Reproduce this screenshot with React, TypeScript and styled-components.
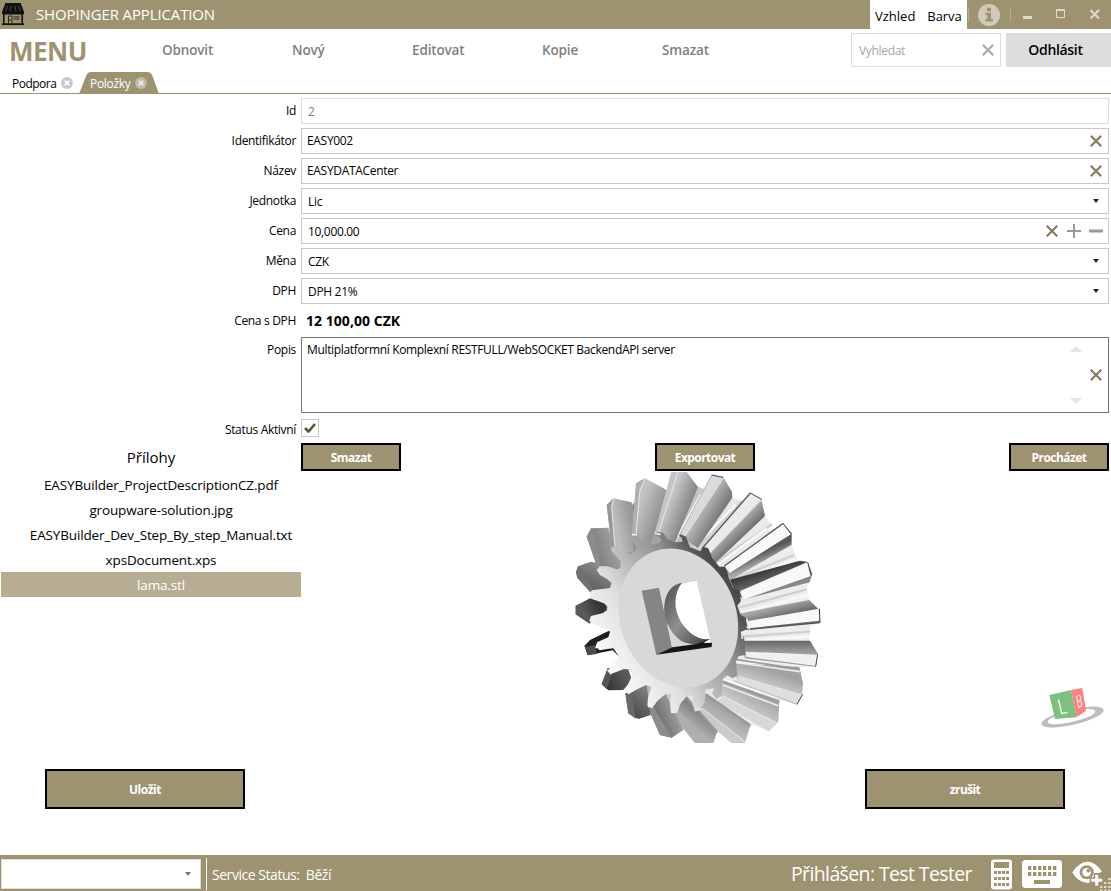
import React from "react";
import styled, { createGlobalStyle } from "styled-components";

const olive = "#9e9371";

const GlobalStyle = createGlobalStyle`
  * { box-sizing: border-box; }
  body {
    margin: 0;
    background: #fff;
    color: #000;
    font-family: "Open Sans", "Noto Sans", sans-serif;
    font-size: 12px;
    overflow: hidden;
  }
  button { font-family: inherit; }
`;

const Window = styled.div`
  width: 1111px;
  height: 891px;
  display: flex;
  flex-direction: column;
  overflow: hidden;
`;

const Label = styled.span<{ $size?: number; $track?: number; $weight?: number; $color?: string }>`
  font-size: ${(p) => p.$size ?? 12}px;
  letter-spacing: ${(p) => p.$track ?? -0.32}px;
  font-weight: ${(p) => p.$weight ?? 400};
  color: ${(p) => p.$color ?? "inherit"};
  white-space: nowrap;
`;

const TitleBar = styled.header`
  height: 29px;
  flex: none;
  display: flex;
  background: ${olive};
  color: #fff;
`;

const AppIcon = styled.div`
  width: 36px;
  padding: 2px 0 0 1px;
`;

const AppName = styled.div`
  flex: 1;
  line-height: 29px;
`;

const ThemeMenu = styled.div`
  width: 97px;
  background: #fff;
  color: #000;
  display: flex;
  gap: 12px;
  padding-left: 5px;
  line-height: 32px;
`;

const InfoBox = styled.div`
  width: 43px;
  margin-left: 1px;
  height: 15px;
  margin-top: 7px;
  padding-right: 2px;
  border-left: 1px solid #b6ad92;
  border-right: 1px solid #b6ad92;
  display: flex;
  align-items: center;
  justify-content: center;
`;

const WindowControls = styled.div`
  width: 100px;
  display: flex;
`;

const Toolbar = styled.nav`
  height: 43px;
  flex: none;
  display: flex;
`;

const MenuTitle = styled.div`
  width: 162px;
  padding-left: 9px;
  line-height: 45px;
`;

const MenuItem = styled.div<{ $width: number }>`
  width: ${(p) => p.$width}px;
  line-height: 42px;
`;

const SearchBox = styled.div`
  width: 150px;
  height: 34px;
  margin: 4px 5px 0 auto;
  border: 1px solid #ddd;
  display: flex;
  align-items: center;
  justify-content: space-between;
  padding: 0 6px 0 7px;
`;

const LogoutButton = styled.button`
  width: 105px;
  height: 34px;
  margin-top: 4px;
  padding: 0 6px 2px 0;
  border: 0;
  background: #ddd;
`;

const TabStrip = styled.div`
  height: 22px;
  flex: none;
  display: flex;
  border-bottom: 1px solid ${olive};
`;

const Tab = styled.div<{ $width: number; $active?: boolean }>`
  position: relative;
  width: ${(p) => p.$width}px;
  height: 22px;
  display: flex;
  align-items: center;
  gap: 5px;
  padding-left: ${(p) => (p.$active ? 10 : 12)}px;
  color: ${(p) => (p.$active ? "#fff" : "#000")};
`;

const TabShape = styled.svg`
  position: absolute;
  left: -1px;
  top: 0;
  z-index: -1;
`;

const Main = styled.main`
  height: 761px;
  flex: none;
  display: flex;
  flex-direction: column;
`;

const Form = styled.form`
  display: flex;
  flex-direction: column;
  gap: 4px;
  padding: 4px 2px 0 0;
`;

const Row = styled.div<{ $height?: number; $lift?: number }>`
  display: flex;
  height: ${(p) => p.$height ?? 26}px;
  margin-top: ${(p) => -(p.$lift ?? 0)}px;
`;

const RowLabel = styled.label`
  width: 301px;
  padding-right: 5px;
  text-align: right;
  line-height: 25px;
  flex: none;
`;

const Field = styled.div<{ $tone?: string; $indent?: number; $raise?: number }>`
  flex: 1;
  border: 1px solid ${(p) => p.$tone ?? "#c8c8c8"};
  display: flex;
  align-items: center;
  justify-content: space-between;
  padding: 0 6px ${(p) => p.$raise ?? 0}px ${(p) => p.$indent ?? 5}px;
`;

const FieldIcons = styled.div`
  display: flex;
  align-items: center;
  gap: 9px;
  margin: 0 -1px 1px 0;
`;

const Total = styled.div`
  padding-left: 5px;
  line-height: 26px;
`;

const Description = styled.div`
  flex: 1;
  border: 1px solid #767676;
  display: flex;
  padding: 0 6px 0 5px;
  line-height: 24px;
`;

const Grow = styled.div`
  flex: 1;
`;

const ScrollArrows = styled.div`
  display: flex;
  flex-direction: column;
  justify-content: space-between;
  padding: 8px 8px 8px 0;
`;

const Center = styled.div`
  display: flex;
  align-items: center;
`;

const CheckBox = styled.div`
  width: 18px;
  height: 18px;
  margin-top: 2px;
  border: 1px solid #c8c8c8;
  display: flex;
  align-items: center;
  justify-content: center;
`;

const Attachments = styled.section`
  display: flex;
  height: 312px;
  padding-right: 2px;
  margin-top: 6px;
`;

const FileColumn = styled.aside`
  width: 301px;
  flex: none;
  padding-left: 1px;
`;

const FileHeading = styled.div`
  height: 29px;
  line-height: 28px;
  text-align: center;
`;

const FileItem = styled.div<{ $selected?: boolean }>`
  height: 25px;
  line-height: 27px;
  padding-left: 20px;
  text-align: center;
  background: ${(p) => (p.$selected ? "#b6ad92" : "transparent")};
  color: ${(p) => (p.$selected ? "#fff" : "#000")};
`;

const Preview = styled.div`
  flex: 1;
  display: flex;
  flex-direction: column;
`;

const ButtonBar = styled.div`
  display: flex;
  justify-content: space-between;
  height: 28px;
`;

const ActionButton = styled.button<{ $width: number }>`
  width: ${(p) => p.$width}px;
  height: 100%;
  padding: 0;
  border: 2px solid #000;
  background: ${olive};
  color: #fff;
  line-height: 20px;
`;

const Scene = styled.div`
  display: flex;
  height: 273px;
  justify-content: space-between;
  align-items: flex-end;
  padding: 0 3px 0 259px;
`;

const CubeSlot = styled.div`
  height: 57px;
`;

const FormActions = styled.div`
  display: flex;
  justify-content: space-between;
  height: 40px;
  margin-top: 14px;
  padding: 0 46px 0 45px;
`;

const StatusBar = styled.footer`
  height: 36px;
  flex: none;
  display: flex;
  background: ${olive};
  color: #fff;
`;

const StatusSelect = styled.div`
  width: 200px;
  height: 30px;
  margin: 4px 0 0 1px;
  background: #fff;
  border: 1px solid #ddd;
  display: flex;
  align-items: center;
  justify-content: flex-end;
  padding-right: 6px;
`;

const StatusText = styled.div`
  margin: 3px 0 0 5px;
  padding-left: 5px;
  height: 32px;
  line-height: 34px;
  border-left: 1px solid #fff;
  flex: 1;
`;

const UserText = styled.div`
  line-height: 38px;
  width: 200px;
`;

const IconTray = styled.div`
  display: flex;
  gap: 9px;
  padding-top: 4px;
  width: 120px;
`;

const Cross = ({ size = 12, color = "#877a60" }: { size?: number; color?: string }) => (
  <svg width={size} height={size} viewBox="0 0 12 12" style={{ display: "block" }}>
    <path d="M.8.8 11.2 11.2M11.2.8.8 11.2" stroke={color} strokeWidth="2.2" fill="none" />
  </svg>
);

const DropArrow = ({ color = "#222" }: { color?: string }) => (
  <svg width="12" height="4" viewBox="0 0 12 4" style={{ display: "block" }}>
    <path d="M3 0h6L6 4z" fill={color} />
  </svg>
);

const TabClose = ({ active }: { active?: boolean }) => (
  <svg width="12" height="12" viewBox="0 0 12 12">
    <circle cx="6" cy="6" r="5.9" fill={active ? "#c0bbaa" : "#c8c8c8"} />
    <path d="M3.6 3.6l4.8 4.8M8.4 3.6L3.6 8.4" stroke={active ? "#eceae2" : "#fff"} strokeWidth="1.6" />
  </svg>
);

const ShopIcon = () => (
  <svg width="24" height="24" viewBox="0 0 24 24">
    <path d="M4 1h16v2H4z" fill="#111" />
    <path d="M3.6 3h16.8L23 10v1.5l-1 1H2l-1-1V10z" fill="#111" />
    <path d="M6.5 4 4.5 9M10 4 9 9M14 4l1 5M17.5 4l2 5" stroke="#5a543f" strokeWidth=".8" />
    <path d="M2 12h1.6v10H2zM20.4 12H22v10h-1.6zM1 21.3h22V23H1z" fill="#111" />
    <path d="M7.5 22v-8H11v8" stroke="#2c281d" fill="none" strokeWidth="1" />
    <path d="M13 14.5h5v3h-5z" stroke="#575039" fill="#6f674c" strokeWidth="1" />
    <path d="M9 17v2" stroke="#2c281d" />
  </svg>
);

const InfoIcon = () => (
  <svg width="22" height="22" viewBox="0 0 22 22" style={{ flex: "none" }}>
    <circle cx="11" cy="11" r="11" fill="#d0cab9" />
    <path d="M9 3.8h4v3.4H9zM7.5 8.7H13v6.5h2v2.2H7.3v-2.2h1.9v-4.3H7.5z" fill={olive} />
  </svg>
);

type Tooth = { face: string; flank: string; tip: string; a: string; b: string; dir: number[] };

/* Teeth in clockwise order, starting at the left side. */
const teeth: Tooth[] = [
  { face: "48,322 54,304 92,290 130,297 120,330 150,348 150,390 90,380 52,338", flank: "48,322 54,304 62,306 98,372 90,380 52,338", tip: "#707070", a: "#606060", b: "#8e8e8e", dir: [90, 370, 130, 295] },
  { face: "80,215 93,190 145,188 160,240 190,305 140,312 112,304", flank: "80,215 93,190 99,196 124,304 112,310", tip: "#8c8c8c", a: "#828282", b: "#a0a0a0", dir: [110, 260, 170, 240] },
  { face: "140,120 160,100 215,112 224,150 220,260 182,270 155,246", flank: "140,120 160,100 155,124 166,248 155,246", tip: "#989898", a: "#999", b: "#bdbdbd", dir: [215, 160, 165, 170] },
  { face: "228,55 255,40 315,72 322,92 270,240 216,215", flank: "228,55 255,40 240,75 228,207 216,213", tip: "#b0b0b0", a: "#929292", b: "#c2c2c2", dir: [305, 140, 240, 115] },
  { face: "334,21 380,21 414,66 345,232 284,208", flank: "334,21 352,21 296,202 284,206", tip: "#c4c4c4", a: "#888", b: "#cfcfcf", dir: [388, 120, 325, 95] },
  { face: "455,30 490,37 516,80 517,98 413,249 358,211", flank: "455,30 490,37 375,213 358,211", tip: "#dadada", a: "#797979", b: "#bcbcbc", dir: [480, 150, 430, 120] },
  { face: "571,84 604,103 615,153 465,295 430,246", flank: "571,84 604,103 450,264 430,246", tip: "#eaeaea", a: "#6a6a6a", b: "#b4b4b4", dir: [555, 215, 520, 180] },
  { face: "668,174 695,205 695,239 511,345 493,303", flank: "668,174 693,208 510,323 493,303", tip: "#fafafa", a: "#a8a8a8", b: "#585858", dir: [607, 295, 595, 265] },
  { face: "720,287 743,291 757,326 749,352 536,407 510,344", flank: "743,291 753,333 551,404 540,378", tip: "#f8f8f8", a: "#383838", b: "#8a8a8a", dir: [630, 310, 650, 375] },
  { face: "748,405 778,435 781,473 555,495 535,446", flank: "776,431 779,467 565,490 560,469", tip: "#f8f8f8", a: "#686868", b: "#a8a8a8", dir: [650, 462, 640, 425] },
  { face: "750,527 773,565 768,605 555,580 540,527", flank: "773,569 767,603 559,576 556,560", tip: "#f0f0f0", a: "#6c6c6c", b: "#b0b0b0", dir: [650, 530, 650, 575] },
  { face: "718,606 729,655 726,690 711,719 530,646 526,595", flank: "726,690 711,718 522,648 540,636", tip: "#dedede", a: "#a2a2a2", b: "#cfcfcf", dir: [650, 622, 632, 676] },
  { face: "658,705 655,770 626,799 479,707 488,646", flank: "651,774 626,799 468,707 487,692", tip: "#d8d8d8", a: "#a6a6a6", b: "#c9c9c9", dir: [600, 690, 570, 740] },
  { face: "572,777 555,834 515,834 404,738 438,684", flank: "558,832 515,834 404,738 427,729", tip: "#cacaca", a: "#9b9b9b", b: "#bdbdbd", dir: [520, 735, 490, 785] },
  { face: "472,797 460,834 405,834 333,743 380,694", flank: "460,834 405,834 333,743 355,739", tip: "#aeaeae", a: "#858585", b: "#b2b2b2", dir: [425, 750, 395, 790] },
  { face: "370,795 335,818 300,810 263,726 318,688", flank: "335,818 300,810 263,726 280,725", tip: "#8c8c8c", a: "#747474", b: "#a0a0a0", dir: [300, 760, 350, 740] },
  { face: "272,750 235,762 205,745 196,685 260,660", flank: "228,762 205,745 196,685 213,683", tip: "#686868", a: "#4a4a4a", b: "#808080", dir: [210, 740, 270, 680] },
  { face: "216,645 190,675 145,676 125,658 143,610 205,613", flank: "143,610 158,622 140,672 125,658", tip: "#555", a: "#383838", b: "#5c5c5c", dir: [145, 660, 205, 640] },
  { face: "178,575 158,556 83,571 73,543 90,525 150,496 152,517 112,533 104,550 160,550", flank: "83,570 75,545 104,541 112,567", tip: "#4c4c4c", a: "#1b1b1b", b: "#222", dir: [160, 550, 80, 550] },
  { face: "138,412 140,436 88,476 47,448 47,422 90,400", flank: "47,422 60,421 94,459 88,474 47,448", tip: "#585858", a: "#333", b: "#5c5c5c", dir: [120, 425, 70, 450] },
];

const Gear = () => (
  <svg width="270" height="285" viewBox="0 0 810 855" style={{ display: "block", marginBottom: -6 }}>
    <defs>
      <linearGradient id="rim" gradientUnits="userSpaceOnUse" x1="120" y1="560" x2="510" y2="300">
        <stop offset="0" stopColor="#f8f8f8" />
        <stop offset=".28" stopColor="#e0e0e0" />
        <stop offset=".45" stopColor="#bcbcbc" />
        <stop offset=".7" stopColor="#8c8c8c" />
        <stop offset=".86" stopColor="#565656" />
        <stop offset="1" stopColor="#3c3c3c" />
      </linearGradient>
      <linearGradient id="webs" gradientUnits="userSpaceOnUse" x1="130" y1="300" x2="680" y2="400">
        <stop offset="0" stopColor="#777" />
        <stop offset=".35" stopColor="#b5b5b5" />
        <stop offset=".6" stopColor="#e6e6e6" />
        <stop offset="1" stopColor="#eee" />
      </linearGradient>
      <linearGradient id="bore" x1="0" y1="0" x2="1" y2="1">
        <stop offset="0" stopColor="#4d4d4d" />
        <stop offset=".5" stopColor="#909090" />
        <stop offset="1" stopColor="#383838" />
      </linearGradient>
      {teeth.map((t, i) => (
        <linearGradient key={i} id={`tooth${i}`} gradientUnits="userSpaceOnUse" x1={t.dir[0]} y1={t.dir[1]} x2={t.dir[2]} y2={t.dir[3]}>
          <stop offset="0" stopColor={t.a} />
          <stop offset="1" stopColor={t.b} />
        </linearGradient>
      ))}
      <clipPath id="viewport"><rect x="0" y="21" width="810" height="813" /></clipPath>
    </defs>
    <g clipPath="url(#viewport)">
      <path fill="url(#webs)" d="M120 330 145 250 220 115 315 75 413 65 432 72 428 88 517 98 545 108 533 122 615 155 636 178 624 192 695 240 712 285 749 352 740 370 748 408 780 473 750 486 750 527 768 605 718 606 720 635 711 718 658 705 626 798 572 777 472 797 370 795 272 750 230 650 150 500z" />
      <path d="M432 72 345 232M545 108 413 249M636 178 465 294M703 270 512 345M740 373 537 428M750 500 545 515" stroke="#d0d0d0" strokeWidth="7" />
      <path d="M423 88 352 216M527 119 405 246M620 190 473 299M706 283 517 358M742 390 538 445M750 514 545 527M720 622 528 590M650 700 490 644" stroke="#f8f8f8" strokeWidth="7" />
      {teeth.map((t, i) => (
        <g key={i}>
          <polygon points={t.face} fill={`url(#tooth${i})`} />
          <polygon points={t.flank} fill={t.tip} />
        </g>
      ))}
      <path d="M718 612 524 583M658 712 488 650M572 783 438 690M472 803 382 700" stroke="#999" strokeWidth="5" />
      <path d="M720 620 524 592M655 722 488 660" stroke="#ededed" strokeWidth="5" />
      <path d="M352 24 296 202M490 40 375 213M604 105 450 264M255 42 240 75 228 207M160 102 155 128 165 247M726 690 535 634M651 774 487 692M557 832 427 730" stroke="#e8e8e8" strokeWidth="3" fill="none" />
      <path d="M455 30 490 37M571 84 605 103M668 174 693 206M743 291 753 332M778 431 780 472M773 568 767 604M728 688 711 718" stroke="#444" strokeWidth="3" fill="none" />
      <path d="M767 604 559 578M711 718 522 648M455 30 358 211" stroke="#666" strokeWidth="1.5" strokeDasharray="4 2" fill="none" />
      <path d="M668 176 493 303M571 84 430 246M780 473 565 493" stroke="#555" strokeWidth="4" fill="none" />
      <path
        fill="url(#rim)"
        d="M120 330 110 315 120 304 142 304 172 313 182 306 182 288 156 260 152 249 166 242 185 261 211 267 227 256 229 244 213 218 216 207 230 206 248 231 276 238 298 234 304 223 283 206 292 200 309 203 322 222 346 232 367 231 366 219 356 212 363 208 378 215 390 247 422 259 427 245 444 249 458 281 478 305 497 305 507 340 520 370 541 378 542 409 532 422 542 449 558 460 560 492 545 500 553 523 556 570 536 573 528 588 532 632 518 640 502 631 488 642 484 694 470 704 456 685 462 670 436 674 434 714 418 735 404 738 397 715 398 692 380 692 360 718 353 741 333 744 330 714 334 687 315 687 292 708 277 728 262 723 264 698 274 666 258 660 233 672 205 688 196 676 218 628 211 612 194 611 153 627 143 618 176 577 174 560 160 549 119 556 108 545 111 532 145 517 150 500 139 493 97 476 88 468 93 453 139 442 143 425 132 415 94 401 89 386 95 376 150 369 155 354 141 342z"
      />
      <path d="M497 306 511 323 503 308M542 379 552 404 541 400M560 461 567 490 560 485M545 500 547 522M216 209 231 210M284 204 302 209M143 615 154 628M197 678 211 684M264 724 278 726M334 742 352 741M405 737 423 731M470 705 486 696" stroke="#eee" strokeWidth="5" fill="none" />
      <ellipse cx="355" cy="459" rx="174" ry="213" transform="rotate(-21 355 459)" fill="#d8d8d8" />
      <path fill="#fff" d="M348 360 410 347 454 540 335 552 300 420z" />
      <path fill="#858585" d="M245 377 297 368 337 548 289 569z" />
      <path fill="#d8d8d8" d="M296 362 366 353 C318 373 306 435 321 471z" />
      <path fill="url(#bore)" d="M366 353 C305 363 302 449 329 493 C353 532 385 547 413 537 L452 522 C416 529 383 502 363 471 C340 432 341 385 366 353z" />
      <path fill="#d8d8d8" d="M322 474 C340 519 370 540 410 537 L336 548z" />
      <path fill="#151515" d="M289 569 337 547 410 537 450 521 430 534 456 533 455 546z" />
    </g>
  </svg>
);

const OrientationCube = () => (
  <svg width="66" height="42" viewBox="0 0 66 42">
    <ellipse cx="32.5" cy="30" rx="32" ry="7.8" transform="rotate(-13 32.5 30)" fill="#bdbdbd" />
    <ellipse cx="31.5" cy="29.6" rx="24.5" ry="5.4" transform="rotate(-13 31.5 29.6)" fill="#fff" />
    <path d="M9.3 8 31 3l5.7 27.3L15 32z" fill="#7fbf7f" />
    <path d="m31 3 11.3-2L46 23.7l-9.3 6.6z" fill="#ff8080" />
    <path d="m18.5 12.7 3.2 13.8 5.6-1" stroke="#eef8ee" strokeWidth="1.5" fill="none" />
    <path d="m36.8 9.5 2.4-1.2q2 .5 1.2 5l-2.6 1.2 2.8-.6q2.2 2 .2 5.5l-2.3 1.3z" stroke="#ffe4e4" strokeWidth="1.1" fill="none" />
  </svg>
);

const CalculatorIcon = () => (
  <svg width="22" height="31" viewBox="0 0 22 31">
    <rect y=".5" width="21" height="30" rx="3" fill="#fff" />
    <path d="M3 3h15v6H3z" fill={olive} />
    {[12, 18, 24].map((y) => [3, 7, 11, 15].map((x) => <rect key={`${x}-${y}`} x={x} y={y} width="3" height="3" fill={olive} />))}
    <path d="M6.500 12v15M10.500 12v15M14.500 12v15" stroke="#fff" />
  </svg>
);

const KeyboardIcon = () => (
  <svg width="40" height="29" viewBox="0 0 40 29">
    <rect y="1" width="40" height="28" rx="3.5" fill="#fff" />
    {[7, 13].map((y) => [6, 11, 16, 21, 26, 31].map((x) => <rect key={`${x}-${y}`} x={x} y={y} width="3.3" height="4" fill={olive} />))}
    <path d="M12 21h16v4H12z" fill={olive} />
  </svg>
);

const resizeDots = [[37, 19], [37, 23], [33, 23], [37, 27], [33, 27], [29, 27], [37, 30.5], [33, 30.5], [29, 30.5]];

const EyeIcon = () => (
  <svg width="40" height="32" viewBox="0 0 40 32">
    <path d="M1.3 13.5Q8 2.7 16.3 2.7T31 12.5l-6 3v7l-8 1.5Q7.3 23.5 1.3 13.5z" fill="#fff" />
    <circle cx="15.7" cy="13.3" r="7" fill={olive} />
    <circle cx="15.7" cy="13.3" r="4.3" fill="#fff" />
    <circle cx="17.3" cy="11.7" r="1.9" fill={olive} />
    <path d="M25.7 14v14M18.7 21.2h14" stroke={olive} strokeWidth="6" />
    <path d="M25.7 15.7v11M20.2 21.2h11" stroke="#fff" strokeWidth="3" />
    {resizeDots.map(([x, y]) => (
      <rect key={`${x}-${y}`} x={x} y={y} width="2.5" height="2" fill="#ded9ce" />
    ))}
  </svg>
);

const files = [
  "EASYBuilder_ProjectDescriptionCZ.pdf",
  "groupware-solution.jpg",
  "EASYBuilder_Dev_Step_By_step_Manual.txt",
  "xpsDocument.xps",
  "lama.stl",
];

const menuItems = [
  { text: "Obnovit", width: 130 },
  { text: "Nový", width: 120 },
  { text: "Editovat", width: 130 },
  { text: "Kopie", width: 120 },
  { text: "Smazat", width: 100 },
];

const SelectRow = ({ label, value }: { label: string; value: string }) => (
  <Row>
    <RowLabel><Label>{label}</Label></RowLabel>
    <Field $indent={6}><Label>{value}</Label><DropArrow /></Field>
  </Row>
);

const TextRow = ({ label, value }: { label: string; value: string }) => (
  <Row>
    <RowLabel><Label>{label}</Label></RowLabel>
    <Field $raise={1}><Label>{value}</Label><Cross /></Field>
  </Row>
);

export default function App() {
  return (
    <Window>
      <GlobalStyle />
      <TitleBar>
        <AppIcon><ShopIcon /></AppIcon>
        <AppName><Label $size={15} $track={-0.13}>SHOPINGER APPLICATION</Label></AppName>
        <ThemeMenu>
          <Label $size={13} $track={0}>Vzhled</Label>
          <Label $size={13} $track={-0.1}>Barva</Label>
        </ThemeMenu>
        <InfoBox><InfoIcon /></InfoBox>
        <WindowControls>
          <svg width="100" height="29" viewBox="0 0 100 29">
            <path d="M12 16h9v3h-9z" fill="#ded9ce" />
            <path d="M45.5 9.5h8v8h-8zM45 10.5h9" stroke="#ded9ce" fill="none" />
            <path d="m79.5 10 8.5 8.5m0-8.5-8.5 8.5" stroke="#ded9ce" strokeWidth="2.2" />
          </svg>
        </WindowControls>
      </TitleBar>
      <Toolbar>
        <MenuTitle><Label $size={26} $track={-0.5} $weight={700} $color={olive}>MENU</Label></MenuTitle>
        {menuItems.map((m) => (
          <MenuItem key={m.text} $width={m.width}>
            <Label $size={13.5} $track={-0.15} $weight={600} $color="#808080">{m.text}</Label>
          </MenuItem>
        ))}
        <SearchBox>
          <Label $color="#a5a5a5">Vyhledat</Label>
          <Cross size={12} color="#aaa" />
        </SearchBox>
        <LogoutButton><Label $size={14} $weight={600}>Odhlásit</Label></LogoutButton>
      </Toolbar>
      <TabStrip>
        <Tab $width={80}><Label $track={-0.5}>Podpora</Label><TabClose /></Tab>
        <Tab $width={80} $active>
          <TabShape width="80" height="22" viewBox="0 0 80 22">
            <path d="M0 22 7 4Q8.5 0 12 0H68Q72 0 73.5 4L80 22z" fill={olive} />
          </TabShape>
          <Label>Položky</Label><TabClose active />
        </Tab>
      </TabStrip>
      <Main>
        <Form>
          <Row>
            <RowLabel><Label>Id</Label></RowLabel>
            <Field $tone="#ddd" $indent={6}><Label $color="#857b6c">2</Label></Field>
          </Row>
          <TextRow label="Identifikátor" value="EASY002" />
          <TextRow label="Název" value="EASYDATACenter" />
          <SelectRow label="Jednotka" value="Lic" />
          <Row>
            <RowLabel><Label>Cena</Label></RowLabel>
            <Field $indent={6}>
              <Label>10,000.00</Label>
              <FieldIcons>
                <Cross />
                <svg width="36" height="14" viewBox="0 0 36 14">
                  <path d="M0 7h14M7 0v14" stroke="#999" strokeWidth="2" />
                  <path d="M22 7h14" stroke="#999" strokeWidth="3" />
                </svg>
              </FieldIcons>
            </Field>
          </Row>
          <SelectRow label="Měna" value="CZK" />
          <SelectRow label="DPH" value="DPH 21%" />
          <Row>
            <RowLabel><Label>Cena s DPH</Label></RowLabel>
            <Total><Label $size={14} $track={0.04} $weight={700}>12 100,00 CZK</Label></Total>
          </Row>
          <Row $height={76} $lift={1}>
            <RowLabel><Label>Popis</Label></RowLabel>
            <Description>
              <Grow><Label $track={-0.34}>Multiplatformní Komplexní RESTFULL/WebSOCKET BackendAPI server</Label></Grow>
              <ScrollArrows>
                <svg width="12" height="6" viewBox="0 0 12 6"><path d="M0 6h12L6 0z" fill="#e5e5e5" /></svg>
                <svg width="12" height="6" viewBox="0 0 12 6"><path d="M0 0h12L6 6z" fill="#e5e5e5" /></svg>
              </ScrollArrows>
              <Center><Cross /></Center>
            </Description>
          </Row>
          <Row $height={20}>
            <RowLabel><Label>Status Aktivní</Label></RowLabel>
            <CheckBox>
              <svg width="12" height="10" viewBox="0 0 12 10"><path d="m1 5 3.5 3.5L11 1" stroke="#5d5438" strokeWidth="2.6" fill="none" /></svg>
            </CheckBox>
          </Row>
        </Form>
        <Attachments>
          <FileColumn>
            <FileHeading><Label $size={15} $track={0}>Přílohy</Label></FileHeading>
            {files.map((name) => (
              <FileItem key={name} $selected={name === "lama.stl"}>
                <Label $size={13.5} $track={-0.14}>{name}</Label>
              </FileItem>
            ))}
          </FileColumn>
          <Preview>
            <ButtonBar>
              <ActionButton $width={100} type="button"><Label $weight={700} $track={-0.55}>Smazat</Label></ActionButton>
              <ActionButton $width={100} type="button"><Label $weight={700} $track={-0.55}>Exportovat</Label></ActionButton>
              <ActionButton $width={100} type="button"><Label $weight={700} $track={-0.55}>Procházet</Label></ActionButton>
            </ButtonBar>
            <Scene>
              <Gear />
              <CubeSlot><OrientationCube /></CubeSlot>
            </Scene>
          </Preview>
        </Attachments>
        <FormActions>
          <ActionButton $width={200}><Label $weight={700} $track={-0.5}>Uložit</Label></ActionButton>
          <ActionButton $width={200}><Label $weight={700} $track={-0.6}>zrušit</Label></ActionButton>
        </FormActions>
      </Main>
      <StatusBar>
        <StatusSelect><DropArrow color="#777" /></StatusSelect>
        <StatusText><Label $size={14} $track={-0.46}>Service Status:&nbsp; Běží</Label></StatusText>
        <UserText><Label $size={19.5} $track={-0.62}>Přihlášen: Test Tester</Label></UserText>
        <IconTray><CalculatorIcon /><KeyboardIcon /><EyeIcon /></IconTray>
      </StatusBar>
    </Window>
  );
}
